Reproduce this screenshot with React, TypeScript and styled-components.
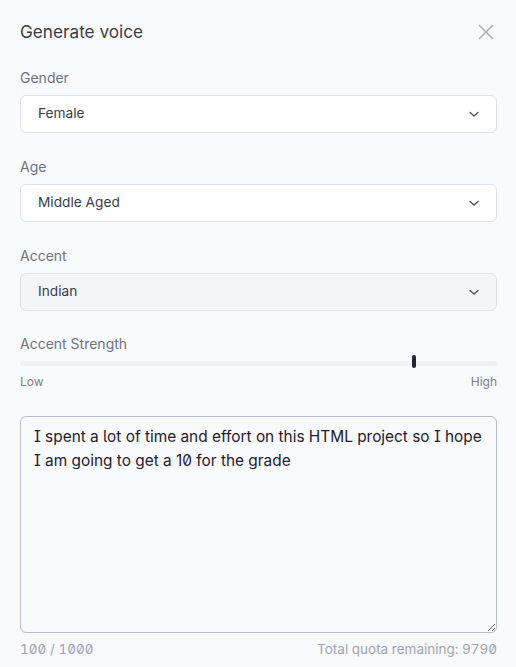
import styled, { createGlobalStyle } from "styled-components";

const GlobalStyle = createGlobalStyle`
  html, body {
    margin: 0;
    padding: 0;
    background: #f9fafb;
    font-family: Inter, "Noto Sans", sans-serif;
  }
`;

const Panel = styled.div`
  width: 516px;
  min-height: 667px;
  box-sizing: border-box;
  padding: 18px 19px 0 20px;
  background: #f9fafb;
  display: flex;
  flex-direction: column;
`;

const Header = styled.div`
  display: flex;
  align-items: center;
  justify-content: space-between;
  height: 28px;
  margin-bottom: 22px;
`;

const Title = styled.h2`
  margin: 0;
  font-size: 17.2px;
  font-weight: 400;
  color: #3a3d4a;
  line-height: 28px;
`;

const CloseButton = styled.button`
  border: 0;
  background: none;
  padding: 0;
  margin-right: 3px;
  width: 16px;
  height: 16px;
  display: flex;
  align-items: center;
  justify-content: center;
  cursor: pointer;
`;

const Field = styled.div`
  display: flex;
  flex-direction: column;
  margin-bottom: 24px;
`;

const Label = styled.label`
  font-size: 14px;
  line-height: 20px;
  color: #6e7184;
  margin-bottom: 7px;
`;

const SelectBox = styled.div<{ $active?: boolean }>`
  height: 38px;
  box-sizing: border-box;
  border: 1px solid #dfe1e8;
  border-radius: 6px;
  background: ${(p) => (p.$active ? "#f3f5f8" : "#ffffff")};
  display: flex;
  align-items: center;
  justify-content: space-between;
  padding: 0 16px 2px 17px;
  font-size: 13.7px;
  color: #3a3d4a;
  svg {
    margin-top: 2px;
  }
`;

const SliderField = styled.div`
  display: flex;
  flex-direction: column;
  margin-top: -1px;
`;

const Track = styled.div`
  position: relative;
  height: 5px;
  border-radius: 3px;
  background: #eff1f5;
  margin: 0 0 7px;
`;

const Thumb = styled.div`
  position: absolute;
  top: -6px;
  width: 4px;
  height: 13px;
  margin-left: -2px;
  border-radius: 2px;
  background: #22223a;
`;

const Scale = styled.div`
  display: flex;
  justify-content: space-between;
  font-size: 12px;
  line-height: 18px;
  color: #7a7d8e;
`;

const TextArea = styled.textarea`
  margin-top: 25px;
  height: 217px;
  box-sizing: border-box;
  border: 1px solid #b9bbcc;
  border-radius: 6px;
  background: #f9fafb;
  padding: 8px 8px 8px 13px;
  font-family: Inter, "Noto Sans", sans-serif;
  font-feature-settings: "ss02", "cv05", "cv08", "zero";
  font-size: 15.4px;
  line-height: 24px;
  color: #1f2030;
  resize: vertical;
  outline: none;
`;

const Footer = styled.div`
  display: flex;
  justify-content: space-between;
  margin-top: 7px;
  font-size: 13.5px;
  line-height: 18px;
  color: #a0a3b3;
  font-feature-settings: "tnum", "zero";
`;

function Chevron() {
  return (
    <svg width="12" height="12" viewBox="0 0 12 12" fill="none">
      <path d="M2 4.5L6 8L10 4.5" stroke="#4b4e5e" strokeWidth="1.4" strokeLinecap="round" strokeLinejoin="round" />
    </svg>
  );
}

const fields = [
  { label: "Gender", value: "Female" },
  { label: "Age", value: "Middle Aged" },
  { label: "Accent", value: "Indian", active: true },
];

export default function App() {
  const strength = 82.6;
  return (
    <>
      <GlobalStyle />
      <Panel>
        <Header>
          <Title>Generate voice</Title>
          <CloseButton aria-label="Close">
            <svg width="16" height="16" viewBox="0 0 16 16" fill="none">
              <path d="M1.5 1.5L14.5 14.5M14.5 1.5L1.5 14.5" stroke="#a3a6b8" strokeWidth="1.4" strokeLinecap="round" />
            </svg>
          </CloseButton>
        </Header>

        {fields.map((f) => (
          <Field key={f.label}>
            <Label>{f.label}</Label>
            <SelectBox $active={f.active}>
              <span>{f.value}</span>
              <Chevron />
            </SelectBox>
          </Field>
        ))}

        <SliderField>
          <Label>Accent Strength</Label>
          <Track>
            <Thumb style={{ left: `${strength}%` }} />
          </Track>
          <Scale>
            <span>Low</span>
            <span>High</span>
          </Scale>
        </SliderField>

        <TextArea defaultValue="I spent a lot of time and effort on this HTML project so I hope I am going to get a 10 for the grade" />

        <Footer>
          <span>100 / 1000</span>
          <span>Total quota remaining: 9790</span>
        </Footer>
      </Panel>
    </>
  );
}
